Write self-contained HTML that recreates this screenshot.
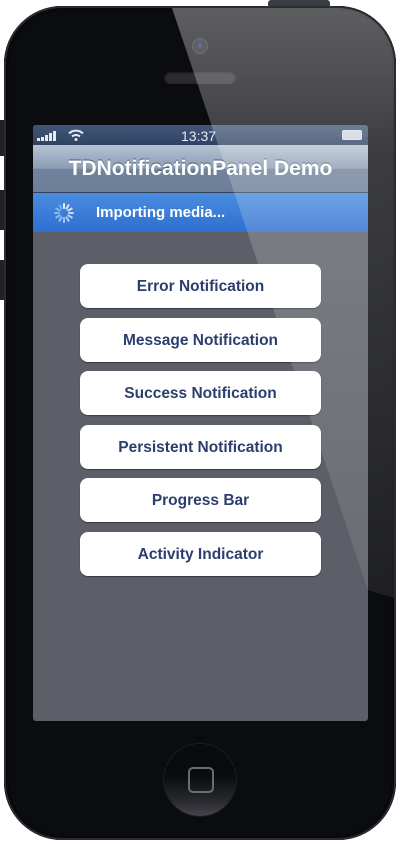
<!DOCTYPE html>
<html><head><meta charset="utf-8"><style>
html,body{margin:0;padding:0;width:400px;height:844px;background:#fff;overflow:hidden;font-family:"Liberation Sans",Arial,sans-serif}
.abs{position:absolute}
#phone{left:4px;top:6px;width:392px;height:834px;border-radius:58px;background:#0b0c10;box-shadow:inset 0 0 0 2px #2a2c31,inset 0 0 0 5px #08090c;}
#screen{left:33px;top:125px;width:335px;height:596px;background:#5c5f67;border-radius:3px;overflow:hidden}
.status{left:0;top:0;width:335px;height:20px;background:linear-gradient(#415777,#2f4263);color:#e6eaf0;font-size:13px;font-weight:bold}
.nav{left:0;top:20px;width:335px;height:47px;background:linear-gradient(#b6c3d3,#8b9cb3 50%,#71839c 51%,#6d7f98);border-bottom:1px solid #34435b;color:#fff;font-weight:bold;font-size:21px;text-align:center;line-height:47px;text-shadow:0 -1px 0 #4a5a72}
.banner{left:0;top:68px;width:335px;height:39px;background:linear-gradient(#4a8ce0,#2f6fd0);color:#fff;font-weight:bold;font-size:15px;line-height:40px}
.btn{left:47px;width:241px;height:44px;background:#fff;border-radius:8px;box-shadow:0 1px 1px rgba(0,0,0,.4);color:#2c3e6e;font-weight:bold;font-size:15.5px;text-align:center;line-height:46px}
.bar{position:absolute;bottom:4px;width:3px;background:#e6eaf0}
</style></head><body>
<div class="abs" style="left:268px;top:0;width:62px;height:8px;background:#3a3d44;border-radius:3px"></div>
<div class="abs" style="left:0;top:120px;width:5px;height:36px;background:#222"></div>
<div class="abs" style="left:0;top:190px;width:5px;height:40px;background:#222"></div>
<div class="abs" style="left:0;top:260px;width:5px;height:40px;background:#222"></div>
<div id="phone" class="abs"></div>
<div class="abs" style="left:193px;top:39px;width:14px;height:14px;border-radius:50%;background:#1a1c26;box-shadow:0 0 0 1px #333"></div>
<div class="abs" style="left:198px;top:44px;width:4px;height:4px;border-radius:50%;background:#24306a"></div>
<div class="abs" style="left:164px;top:71px;width:72px;height:13px;border-radius:7px;background:#2a2b2f;box-shadow:inset 0 1px 2px #000"></div>
<div id="screen" class="abs">
 <div class="abs status">
  <div class="bar" style="left:4px;height:3px"></div>
  <div class="bar" style="left:8px;height:4px"></div>
  <div class="bar" style="left:12px;height:6px"></div>
  <div class="bar" style="left:16px;height:8px"></div>
  <div class="bar" style="left:20px;height:10px"></div>
  <svg class="abs" style="left:35px;top:4px" width="16" height="12" viewBox="0 0 16 12"><g fill="none" stroke="#e6eaf0" stroke-width="2"><path d="M1 4.5A10 10 0 0 1 15 4.5"/><path d="M4 7.5A6 6 0 0 1 12 7.5"/></g><circle cx="8" cy="10.5" r="1.5" fill="#e6eaf0"/></svg>
  <span class="abs" style="left:148px;top:3px;font-size:14px;font-weight:normal">13:37</span>
  <div class="abs" style="left:309px;top:5px;width:18px;height:8px;border:1px solid #dde;border-radius:2px;background:#cfd6e0"></div>
 </div>
 <div class="abs nav">TDNotificationPanel Demo</div>
 <div class="abs banner">
  <svg class="abs" style="left:20px;top:9px" width="22" height="22" viewBox="-11 -11 22 22">
   <g stroke="#e8f0ff" stroke-width="2" stroke-linecap="round">
    <line x1="0" y1="-5" x2="0" y2="-9" transform="rotate(0)" opacity="1"/>
    <line x1="0" y1="-5" x2="0" y2="-9" transform="rotate(30)" opacity=".9"/>
    <line x1="0" y1="-5" x2="0" y2="-9" transform="rotate(60)" opacity=".85"/>
    <line x1="0" y1="-5" x2="0" y2="-9" transform="rotate(90)" opacity=".8"/>
    <line x1="0" y1="-5" x2="0" y2="-9" transform="rotate(120)" opacity=".75"/>
    <line x1="0" y1="-5" x2="0" y2="-9" transform="rotate(150)" opacity=".7"/>
    <line x1="0" y1="-5" x2="0" y2="-9" transform="rotate(180)" opacity=".65"/>
    <line x1="0" y1="-5" x2="0" y2="-9" transform="rotate(210)" opacity=".6"/>
    <line x1="0" y1="-5" x2="0" y2="-9" transform="rotate(240)" opacity=".55"/>
    <line x1="0" y1="-5" x2="0" y2="-9" transform="rotate(270)" opacity=".5"/>
    <line x1="0" y1="-5" x2="0" y2="-9" transform="rotate(300)" opacity=".45"/>
    <line x1="0" y1="-5" x2="0" y2="-9" transform="rotate(330)" opacity=".4"/>
   </g></svg>
  <span class="abs" style="left:63px;top:0">Importing media...</span>
 </div>
 <div class="abs btn" style="top:139px">Error Notification</div>
 <div class="abs btn" style="top:193px">Message Notification</div>
 <div class="abs btn" style="top:246px">Success Notification</div>
 <div class="abs btn" style="top:300px">Persistent Notification</div>
 <div class="abs btn" style="top:353px">Progress Bar</div>
 <div class="abs btn" style="top:407px">Activity Indicator</div>
</div>
<svg class="abs" style="left:0;top:0" width="400" height="844">
 <defs><clipPath id="c"><rect x="6" y="8" width="388" height="830" rx="56"/></clipPath>
 <linearGradient id="g" x1="0" y1="0" x2="0" y2="1"><stop offset="0" stop-color="#fff" stop-opacity=".34"/><stop offset=".25" stop-color="#fff" stop-opacity=".2"/><stop offset="1" stop-color="#fff" stop-opacity=".08"/></linearGradient></defs>
 <polygon clip-path="url(#c)" points="172,8 400,8 400,600 368,590" fill="url(#g)"/>
</svg>
<div class="abs" style="left:164px;top:744px;width:72px;height:72px;border-radius:50%;background:linear-gradient(#0a0b0f 45%,#2a2b30 80%,#45464b);box-shadow:0 0 0 1px #1d1e22"></div>
<div class="abs" style="left:188px;top:767px;width:22px;height:22px;border:2px solid #6b6c72;border-radius:5px"></div>
</body></html>
